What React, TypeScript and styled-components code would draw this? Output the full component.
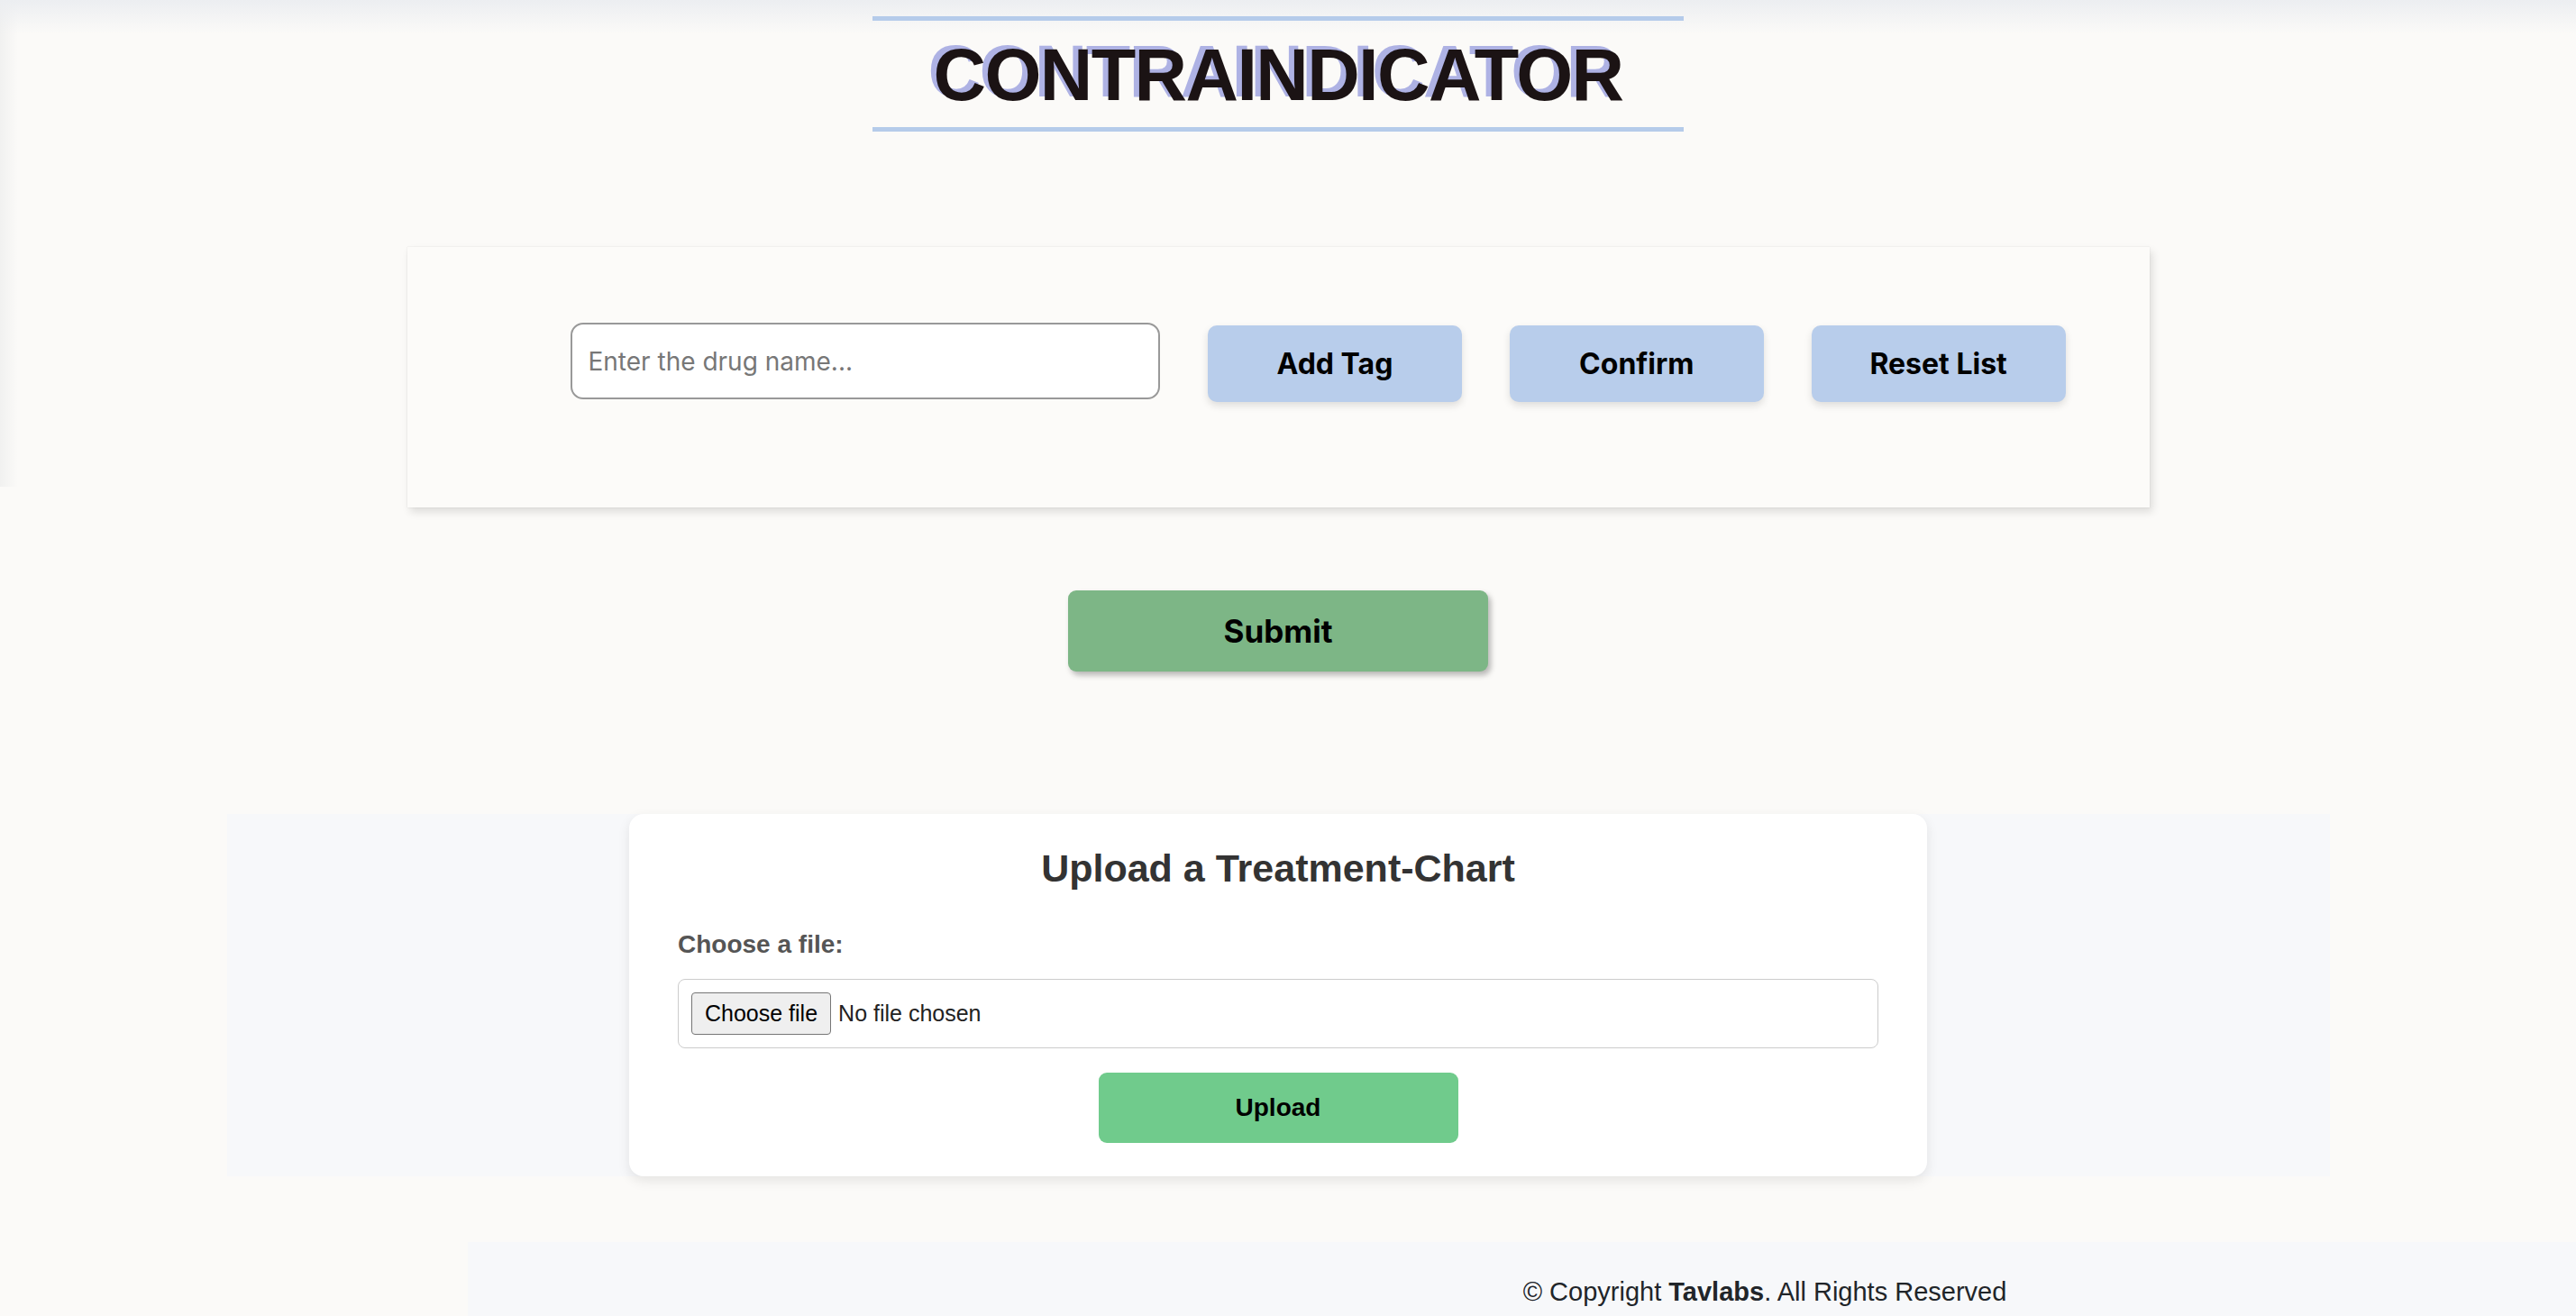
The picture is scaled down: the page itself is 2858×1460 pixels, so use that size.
import { FC } from 'react';
import styled, { createGlobalStyle } from 'styled-components';

const GlobalStyle = createGlobalStyle`
  html, body {
    margin: 0;
    padding: 0;
  }
  body {
    overflow-x: hidden;
    font-family: 'Liberation Sans', Arial, sans-serif;
    background:
      linear-gradient(to bottom, #eceef1, rgba(251, 250, 248, 0) 38px) top left / 100% 38px no-repeat,
      linear-gradient(to right, #f1f1f0, rgba(251, 250, 248, 0) 20px) top left / 20px 540px no-repeat,
      #fbfaf8;
  }
`;

const Main = styled.main`
  width: calc(100% - 22px);
  display: flex;
  flex-direction: column;
  align-items: center;
`;

const Title = styled.h1`
  width: 900px;
  margin: 18px 0 0;
  padding: 14px 0 12px;
  border-top: 5px solid #b5cbea;
  border-bottom: 5px solid #b5cbea;
  text-align: center;
  font-family: 'Liberation Sans', Arial, sans-serif;
  font-size: 81px;
  font-weight: 700;
  line-height: 92px;
  letter-spacing: -1.6px;
  color: #1b1314;
  text-shadow: -6px -4px 0 #aeb2e4;
`;

const TagCard = styled.section`
  box-sizing: border-box;
  width: 1933px;
  margin-top: 128px;
  padding: 87px 93px 117px 181px;
  background: #fcfbf9;
  box-shadow: 0 0 1px rgba(0, 0, 0, 0.18), 3px 5px 9px rgba(0, 0, 0, 0.12);
`;

const TagRow = styled.div`
  display: flex;
  align-items: center;
  gap: 53px;
`;

const DrugInput = styled.input`
  box-sizing: border-box;
  width: 655px;
  height: 85px;
  margin-top: -6px;
  padding: 0 18px;
  border: 2px solid #999;
  border-radius: 14px;
  background: #fff;
  font-family: Inter, 'Noto Sans', sans-serif;
  font-size: 28px;
  color: #222;
  outline: none;
  &::placeholder {
    color: #777;
  }
`;

const TagButton = styled.button`
  width: 282px;
  height: 85px;
  border: none;
  border-radius: 10px;
  background: #b8cdeb;
  box-shadow: 0 4px 8px rgba(0, 0, 0, 0.12);
  font-family: Inter, 'Noto Sans', sans-serif;
  font-size: 32px;
  font-weight: 700;
  color: #000;
  cursor: pointer;
`;

const SubmitButton = styled.button`
  width: 466px;
  height: 90px;
  margin-top: 92px;
  border: none;
  border-radius: 9px;
  background: #7db686;
  box-shadow: 3px 4px 6px rgba(0, 0, 0, 0.28);
  font-family: Inter, 'Noto Sans', sans-serif;
  font-size: 35px;
  font-weight: 700;
  color: #000;
  cursor: pointer;
`;

const UploadSection = styled.section`
  width: 2333px;
  margin-top: 158px;
  display: flex;
  justify-content: center;
  background: #f7f8fa;
`;

const UploadCard = styled.form`
  box-sizing: border-box;
  width: 1440px;
  padding: 36px 54px 37px;
  display: flex;
  flex-direction: column;
  background: #fff;
  border-radius: 16px;
  box-shadow: 0 5px 14px rgba(0, 0, 0, 0.09);
`;

const UploadHeading = styled.h2`
  margin: 0;
  text-align: center;
  font-size: 43px;
  font-weight: 700;
  line-height: 48px;
  color: #333;
`;

const FileLabel = styled.label`
  margin-top: 45px;
  font-size: 28px;
  font-weight: 700;
  line-height: 32px;
  color: #555;
`;

const FileBox = styled.div`
  box-sizing: border-box;
  height: 77px;
  margin-top: 22px;
  padding: 0 14px;
  display: flex;
  align-items: center;
  gap: 8px;
  border: 1px solid #ccc;
  border-radius: 8px;
`;

const HiddenInput = styled.input`
  position: absolute;
  width: 1px;
  height: 1px;
  opacity: 0;
  pointer-events: none;
`;

const FilePicker = styled.label`
  box-sizing: border-box;
  height: 47px;
  padding: 0 14px;
  display: flex;
  align-items: center;
  border: 1px solid #767676;
  border-radius: 4px;
  background: #efefef;
  font-size: 25px;
  color: #000;
  cursor: pointer;
`;

const FileName = styled.span`
  font-size: 25px;
  color: #222;
`;

const UploadButton = styled.button`
  align-self: center;
  width: 399px;
  height: 78px;
  margin-top: 27px;
  border: none;
  border-radius: 9px;
  background: #70cb8c;
  font-family: 'Liberation Sans', Arial, sans-serif;
  font-size: 28px;
  font-weight: 700;
  color: #000;
  cursor: pointer;
`;

const Footer = styled.footer`
  margin: 73px 0 0 519px;
  padding: 39px 0 40px 539px;
  background: #f7f8fa;
  text-align: center;
  font-size: 29px;
  line-height: 33px;
  color: #212529;
`;

const App: FC = () => (
  <>
    <GlobalStyle />
    <Main>
      <Title>CONTRAINDICATOR</Title>
      <TagCard>
        <TagRow>
          <DrugInput type="text" placeholder="Enter the drug name..." />
          <TagButton>Add Tag</TagButton>
          <TagButton>Confirm</TagButton>
          <TagButton>Reset List</TagButton>
        </TagRow>
      </TagCard>
      <SubmitButton>Submit</SubmitButton>
      <UploadSection>
        <UploadCard onSubmit={(e) => e.preventDefault()}>
          <UploadHeading>Upload a Treatment-Chart</UploadHeading>
          <FileLabel htmlFor="chart-file">Choose a file:</FileLabel>
          <FileBox>
            <HiddenInput id="chart-file" type="file" />
            <FilePicker htmlFor="chart-file">Choose file</FilePicker>
            <FileName>No file chosen</FileName>
          </FileBox>
          <UploadButton type="submit">Upload</UploadButton>
        </UploadCard>
      </UploadSection>
    </Main>
    <Footer>
      © Copyright <strong>Tavlabs</strong>. All Rights Reserved
    </Footer>
  </>
);

export default App;
